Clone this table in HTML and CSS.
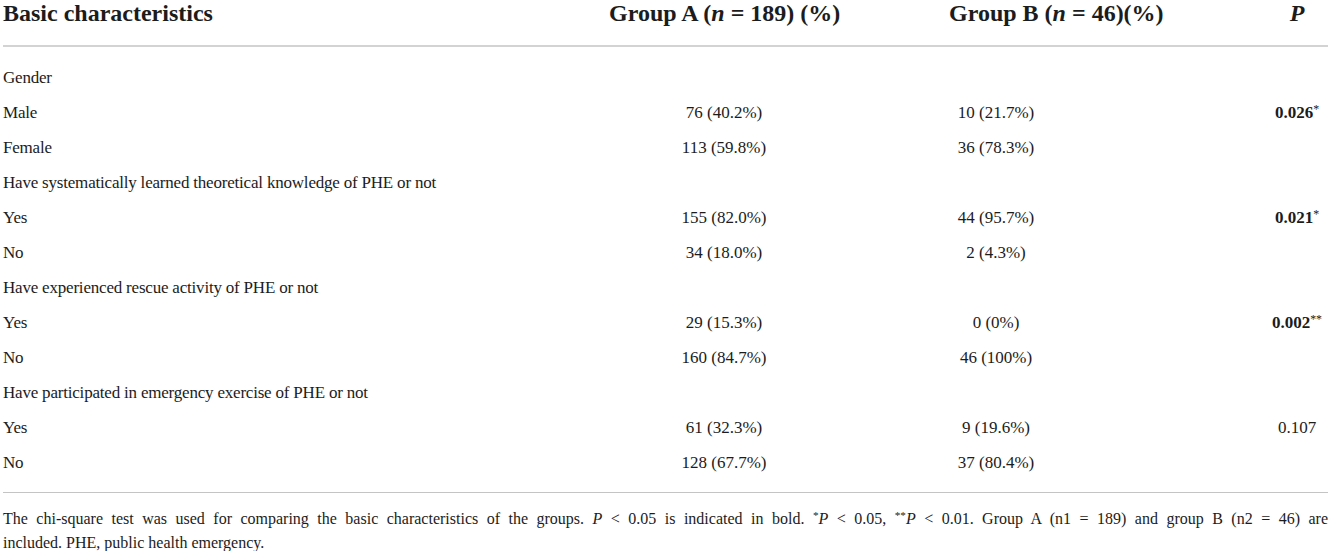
FILE: index.html
```html
<!DOCTYPE html>
<html lang="en">
<head>
<meta charset="utf-8">
<title>Basic characteristics</title>
<link rel="stylesheet" href="styles.css">
</head>
<body>
<div class="wrap">
  <div class="thead">
    <div class="th th-label">Basic characteristics</div>
    <div class="th th-a">Group A (<i>n</i> = 189) (%)</div>
    <div class="th th-b">Group B (<i>n</i> = 46)(%)</div>
    <div class="th th-p"><i>P</i></div>
  </div>
  <div class="tbody">
    <div class="row group"><div class="cell label">Gender</div></div>
    <div class="row"><div class="cell label">Male</div><div class="cell num">76 (40.2%)</div><div class="cell num">10 (21.7%)</div><div class="cell pv"><b>0.026</b><sup>*</sup></div></div>
    <div class="row"><div class="cell label">Female</div><div class="cell num">113 (59.8%)</div><div class="cell num">36 (78.3%)</div><div class="cell pv"></div></div>
    <div class="row group"><div class="cell label">Have systematically learned theoretical knowledge of PHE or not</div></div>
    <div class="row"><div class="cell label">Yes</div><div class="cell num">155 (82.0%)</div><div class="cell num">44 (95.7%)</div><div class="cell pv"><b>0.021</b><sup>*</sup></div></div>
    <div class="row"><div class="cell label">No</div><div class="cell num">34 (18.0%)</div><div class="cell num">2 (4.3%)</div><div class="cell pv"></div></div>
    <div class="row group"><div class="cell label">Have experienced rescue activity of PHE or not</div></div>
    <div class="row"><div class="cell label">Yes</div><div class="cell num">29 (15.3%)</div><div class="cell num">0 (0%)</div><div class="cell pv"><b>0.002</b><sup>**</sup></div></div>
    <div class="row"><div class="cell label">No</div><div class="cell num">160 (84.7%)</div><div class="cell num">46 (100%)</div><div class="cell pv"></div></div>
    <div class="row group"><div class="cell label">Have participated in emergency exercise of PHE or not</div></div>
    <div class="row"><div class="cell label">Yes</div><div class="cell num">61 (32.3%)</div><div class="cell num">9 (19.6%)</div><div class="cell pv">0.107</div></div>
    <div class="row"><div class="cell label">No</div><div class="cell num">128 (67.7%)</div><div class="cell num">37 (80.4%)</div><div class="cell pv"></div></div>
  </div>
  <div class="note">
    <span class="note-line justified">The chi-square test was used for comparing the basic characteristics of the groups. <i>P</i> &lt; 0.05 is indicated in bold. <sup>*</sup><i>P</i> &lt; 0.05, <sup>**</sup><i>P</i> &lt; 0.01. Group A (n1 = 189) and group B (n2 = 46) are</span>
    <span class="note-line">included. PHE, public health emergency.</span>
  </div>
</div>
</body>
</html>
```
FILE: styles.css
```css
* { box-sizing: border-box; }
html, body { margin: 0; padding: 0; background: #fff; }
body {
  font-family: "Liberation Serif", "Times New Roman", serif;
  color: #1c1c1c;
}
.wrap { padding: 0 3px; width: 1331px; }

.thead, .row {
  display: grid;
  grid-template-columns: 587px 268px 276px 1fr;
}
.thead {
  padding-bottom: 19px;
  border-bottom: 2px solid #d3d3d3;
}
.th {
  font-weight: bold;
  font-size: 24px;
  line-height: 26px;
  white-space: nowrap;
}
.th-a { padding-left: 19px; }
.th-b { padding-left: 91px; }
.th-p { padding-left: 132px; text-align: center; }

.tbody {
  padding: 13px 0 12px;
  border-bottom: 1px solid #c4c4c4;
}
.row { height: 35px; }
.cell {
  font-size: 17px;
  line-height: 35px;
  white-space: nowrap;
}
.label { letter-spacing: -0.2px; }
.group .label { grid-column: 1 / -1; }
.num { text-align: center; }
.pv { padding-left: 132px; text-align: center; }
.pv sup, .note sup {
  font-size: 0.7em;
  vertical-align: 0.45em;
  line-height: 0;
  font-weight: normal;
}

.note {
  padding-top: 14px;
  font-size: 16px;
  line-height: 24px;
}
.note-line { display: block; white-space: nowrap; }
.note-line.justified {
  white-space: normal;
  text-align: justify;
  text-align-last: justify;
}
```
